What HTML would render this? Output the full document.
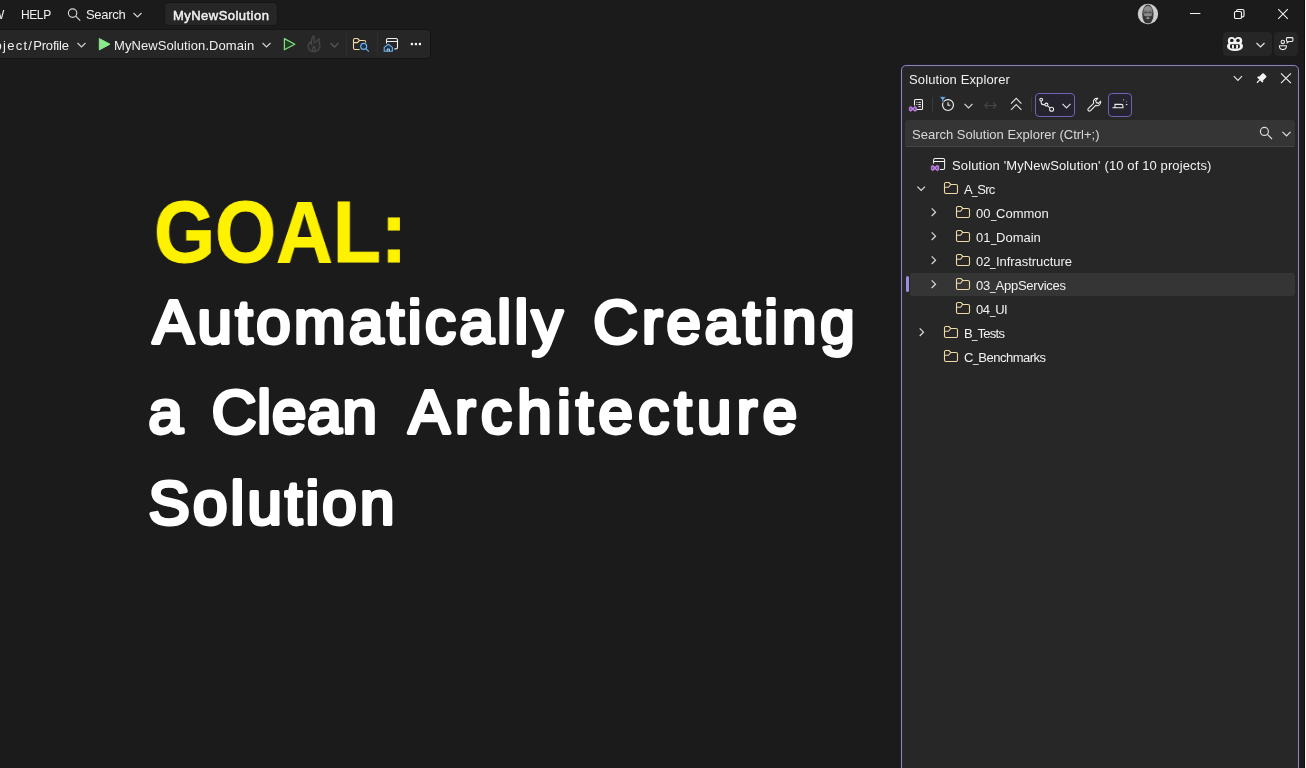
<!DOCTYPE html>
<html lang="en">
<head>
<meta charset="utf-8">
<title>MyNewSolution</title>
<style>
*{box-sizing:border-box;margin:0;padding:0}
html,body{width:1306px;height:768px;overflow:hidden;background:#1b1b1b}
body{position:relative;font-family:"Liberation Sans",sans-serif;font-size:13px;color:#f0f0f0}
.abs{position:absolute}
.t{will-change:transform;position:absolute;white-space:nowrap;line-height:16px;height:16px;transform-origin:0 50%}
svg{position:absolute;overflow:visible}
/* top bar */
#tab{left:165px;top:3px;width:112px;height:22px;background:#262626;border-radius:4px;box-shadow:0 0 0 1px #161616}
#toolbar{left:-6px;top:30px;width:436px;height:28px;background:#262626;border-radius:4px;box-shadow:0 0 0 1px #151515}
.sep{position:absolute;width:1px;background:#2f2f2f}
/* solution explorer */
#se{left:901px;top:65px;width:398px;height:720px;background:#272727;border:1px solid #8a86ae;border-radius:5px;box-shadow:0 0 2.5px rgba(52,36,130,.55),inset 0 0 2.5px rgba(52,36,130,.55)}
#search{left:905px;top:120px;width:390px;height:27px;background:#353535;border-radius:4px 4px 2px 2px;border-bottom:1.4px solid #464646}
#sel{left:910px;top:272.5px;width:385px;height:23.5px;background:#353535;border-radius:3px}
#selbar{left:906px;top:276px;width:3.3px;height:16px;background:#978ee0;border-radius:1.6px}
.tb{position:absolute;border:1px solid #6f63b8;border-radius:4px;background:#24232e}
.row{font-size:13px;color:#f2f2f2}
.u{display:inline-block;transform:scaleX(0.76);transform-origin:0 50%;margin-right:-1.75px;letter-spacing:0}
/* big text */
#goal{left:153.74px;top:182.3px;font-family:"Liberation Sans",sans-serif;font-weight:bold;font-size:86.82px;line-height:100px;height:100px;color:#fff200;-webkit-text-stroke:1px #fff200;transform-origin:0 50%;transform:scaleX(0.9044)}
.big{font-family:"Liberation Sans",sans-serif;font-weight:bold;font-size:67.7px;line-height:90px;height:90px;color:#fff;transform-origin:0 50%}
</style>
</head>
<body>
<!-- top menu -->
<div class="t" id="tW" style="left:-7px;top:7px;font-size:12px">W</div>
<div class="t" id="tHelp" style="left:21px;top:7px;font-size:12px;letter-spacing:-0.4px">HELP</div>
<svg style="left:67px;top:8px" width="14" height="13" viewBox="67 8 14 13" fill="none" stroke="#d6d6d6" stroke-width="1.15"><circle cx="72.6" cy="13.1" r="4.2"/><path d="M75.7 16.2 L80.2 20.6"/></svg>
<div class="t" id="tSearch" style="left:86px;top:7px;font-size:13px;letter-spacing:-0.309px">Search</div>
<svg style="left:133px;top:12px" width="9" height="6" viewBox="0 0 9 6" fill="none" stroke="#d0d0d0" stroke-width="1.2"><path d="M0.5 1 L4.5 5 L8.5 1"/></svg>
<div class="abs" id="tab"></div>
<div class="t" id="tTab" style="left:173px;top:8px;font-size:13px;-webkit-text-stroke:0.5px #f0f0f0;letter-spacing:0.465px">MyNewSolution</div>

<!-- window controls -->
<svg style="left:1137px;top:3px" width="22" height="22" viewBox="0 0 22 22">
<defs><clipPath id="av"><circle cx="10.95" cy="11" r="10.2"/></clipPath><filter id="avb" x="-20%" y="-20%" width="140%" height="140%"><feGaussianBlur stdDeviation="0.55"/></filter></defs>
<g clip-path="url(#av)"><rect width="22" height="22" fill="#cdcdcd"/><g filter="url(#avb)"><ellipse cx="10.9" cy="11.2" rx="5.7" ry="9.6" fill="#3e3e3e"/><ellipse cx="10.9" cy="9" rx="4.5" ry="6.2" fill="#808080"/><ellipse cx="10.9" cy="5.6" rx="3.4" ry="1.8" fill="#8f8f8f"/><rect x="7.2" y="8.7" width="7.4" height="1.5" fill="#4e4e4e"/><rect x="10.4" y="8.5" width="1" height="3" fill="#8a8a8a"/><ellipse cx="10.9" cy="12" rx="3.6" ry="1.3" fill="#8a8a8a"/><path d="M6.3 12.6 C7.6 13.8 14.2 13.8 15.5 12.6 C16 16.4 14.4 20.6 10.9 20.6 C7.4 20.6 5.8 16.4 6.3 12.6 Z" fill="#343434"/><ellipse cx="10.9" cy="15.1" rx="1.7" ry="0.9" fill="#a8a8a8"/><ellipse cx="10.9" cy="22" rx="7" ry="1.8" fill="#b4b4b4"/></g></g></svg>
<svg style="left:1190px;top:13px" width="11" height="1" viewBox="0 0 11 1"><rect x="0" y="0" width="10.4" height="1" fill="#f4f4f4"/></svg>
<svg style="left:1233px;top:8px" width="12" height="12" viewBox="0 0 12 12" fill="none" stroke="#f4f4f4" stroke-width="1.15"><rect x="1.5" y="3.5" width="7" height="7" rx="1.3"/><path d="M3.6 3.3 V3 a1.5 1.5 0 0 1 1.5 -1.5 H9.5 a1.5 1.5 0 0 1 1.5 1.5 V7.4 a1.5 1.5 0 0 1 -1.5 1.5 H8.7"/></svg>
<svg style="left:1278px;top:9px" width="10" height="10" viewBox="0 0 10 10" fill="none" stroke="#f0f0f0" stroke-width="1.1"><path d="M0.2 0.2 L9.8 9.8 M9.8 0.2 L0.2 9.8"/></svg>

<!-- toolbar -->
<div class="abs" id="toolbar"></div>
<div class="t" id="tProf" style="left:-11.45px;top:38px;font-size:13px;letter-spacing:-0.17px"><span style="letter-spacing:1.25px">roject/</span>Profile</div>
<svg style="left:77px;top:42px" width="9" height="6" viewBox="0 0 9 6" fill="none" stroke="#d0d0d0" stroke-width="1.2"><path d="M0.5 1 L4.5 5 L8.5 1"/></svg>
<svg style="left:98px;top:37px" width="14" height="14" viewBox="98 37 14 14"><path d="M99.3 38.6 L110 44.2 L99.3 49.9 Z" fill="#8be88b" stroke="#8be88b" stroke-width="1" stroke-linejoin="round"/></svg>
<div class="t" id="tDom" style="left:114px;top:38px;font-size:13px;letter-spacing:0.082px">MyNewSolution.Domain</div>
<svg style="left:262px;top:42px" width="9" height="6" viewBox="0 0 9 6" fill="none" stroke="#d0d0d0" stroke-width="1.2"><path d="M0.5 1 L4.5 5 L8.5 1"/></svg>
<svg style="left:283px;top:37px" width="14" height="14" viewBox="283 37 14 14"><path d="M284.4 38.6 L294.8 44.2 L284.4 49.8 Z" fill="#1f3d1f" stroke="#86dc86" stroke-width="1.2" stroke-linejoin="round"/></svg>
<svg style="left:307px;top:35px" width="15" height="18" viewBox="0 0 15 18" fill="#2b2b2b" stroke="#474747" stroke-width="1.3"><path d="M6.6 1 C9 3.2 5.4 5.6 7.8 7.8 C9 7 9.6 5 12.2 4 C10.8 7 13.8 8.6 12.8 12.2 C12 15.2 9.4 16.8 6.8 16.8 C3.6 16.8 1 14.4 1 11.2 C1 9.2 2 8 3 7 C3.4 8.2 3.8 9 4.6 9.4 C4 6 4.6 3.2 6.6 1 Z"/><path d="M6.9 16.6 C5.2 15.6 5 13.4 7 11.6 C8.8 13.2 8.8 15.4 6.9 16.6" fill="none"/></svg>
<svg style="left:330px;top:42px" width="9" height="6" viewBox="0 0 9 6" fill="none" stroke="#555555" stroke-width="1.4"><path d="M0.5 1 L4.5 5 L8.5 1"/></svg>
<div class="sep" style="left:346px;top:33px;height:23px"></div>
<svg style="left:353px;top:37px" width="18" height="17" viewBox="353 37 18 17" fill="none" stroke-width="1.1"><path d="M359.6 49.5 H355 a1.5 1.5 0 0 1 -1.5 -1.5 V40 a1.5 1.5 0 0 1 1.5 -1.5 H357.6 L359.5 40.5 H364.2 a1.5 1.5 0 0 1 1.5 1.5 V42.4 M353.5 42.6 H357.4 L359.5 40.5" stroke="#f0d9a6"/><circle cx="363.7" cy="46.4" r="3" stroke="#70aee8" fill="#17324e" stroke-width="1.15"/><path d="M365.9 48.7 L368.9 51.7" stroke="#70aee8" stroke-width="1.2"/></svg>
<div class="sep" style="left:377px;top:33px;height:23px"></div>
<svg style="left:383px;top:37px" width="17" height="16" viewBox="383 37 17 16" fill="none" stroke-width="1.1"><path d="M386.5 43.4 V40 a1.5 1.5 0 0 1 1.5 -1.5 H396 a1.5 1.5 0 0 1 1.5 1.5 V47.4 a1.5 1.5 0 0 1 -1.5 1.5 H394.4 M386.5 41.5 H397.5" stroke="#f2f2f2"/><path d="M384.2 47.4 L388.3 44.2 L392.4 47.4 V51.2 H384.2 Z" stroke="#70aee8" fill="#17324e" stroke-linejoin="round"/><path d="M387.2 51.2 V49 H389.4 V51.2" stroke="#d8e6f4" stroke-width="0.9"/></svg>
<svg style="left:410px;top:42px" width="12" height="4" viewBox="0 0 12 4" fill="#f4f4f4"><rect x="0.8" y="0.9" width="2.2" height="2.3"/><rect x="4.8" y="0.9" width="2.2" height="2.3"/><rect x="8.8" y="0.9" width="2.2" height="2.3"/></svg>

<!-- copilot buttons -->
<div class="abs" style="left:1223px;top:32px;width:49px;height:24px;background:#262626;border-radius:4px"></div>
<div class="abs" style="left:1274px;top:32px;width:24px;height:24px;background:#252525;border-radius:4px"></div>
<svg style="left:1226px;top:36px" width="18" height="16" viewBox="1226 36 18 16"><ellipse cx="1235" cy="46.2" rx="8" ry="4.9" fill="#f4f4f4"/><circle cx="1231.6" cy="40.8" r="3.8" fill="#f4f4f4"/><circle cx="1238.4" cy="40.8" r="3.8" fill="#f4f4f4"/><ellipse cx="1231.8" cy="40.4" rx="1.8" ry="1.6" fill="#1e1e1e"/><ellipse cx="1238" cy="40.4" rx="1.8" ry="1.6" fill="#1e1e1e"/><rect x="1230" y="44.2" width="9.8" height="4.2" rx="1.4" fill="#1e1e1e"/><rect x="1232" y="44.9" width="1.9" height="3.6" fill="#f4f4f4"/><rect x="1236.1" y="44.9" width="1.9" height="3.6" fill="#f4f4f4"/></svg>
<svg style="left:1256px;top:42px" width="9" height="6" viewBox="0 0 9 6" fill="none" stroke="#e4e4e4" stroke-width="1.2"><path d="M0.5 1 L4.5 5 L8.5 1"/></svg>
<svg style="left:1278px;top:36px" width="16" height="16" viewBox="1278 36 16 16" fill="none" stroke="#ececec" stroke-width="1.1"><circle cx="1282.8" cy="41.9" r="1.7"/><path d="M1279.4 45.8 H1286.4 C1286.4 48.2 1284.8 49.6 1282.9 49.6 C1281 49.6 1279.4 48.2 1279.4 45.8 Z"/><path d="M1287.4 37.6 H1292 a0.9 0.9 0 0 1 0.9 0.9 V40.6 a0.9 0.9 0 0 1 -0.9 0.9 H1288.8 L1287.2 42.8 V41.4 a0.9 0.9 0 0 1 -0.7 -0.9 V38.5 a0.9 0.9 0 0 1 0.9 -0.9 Z"/></svg>

<!-- big text -->
<div class="t" id="goal">GOAL:</div>
<svg id="bigsvg" style="left:0;top:270px" width="900" height="300" viewBox="0 270 900 300" font-family="Liberation Sans, sans-serif" font-size="61.8" fill="#ffffff" stroke="#ffffff" stroke-width="3.8" stroke-linejoin="round" stroke-linecap="round">
<text id="w1" x="152.82" y="343.1" textLength="409.96" lengthAdjust="spacing">Automatically</text>
<text id="w2" x="593.35" y="343.1" textLength="261.24" lengthAdjust="spacing">Creating</text>
<text id="w3" x="148.6" y="433.4">a</text>
<text id="w4" x="211.87" y="433.4" textLength="164.89" lengthAdjust="spacing">Clean</text>
<text id="w5" x="408.5" y="433.4" textLength="388.53" lengthAdjust="spacing">Architecture</text>
<text id="w6" x="148.61" y="523.7" textLength="245.7" lengthAdjust="spacing">Solution</text>
</svg>

<!-- solution explorer -->
<div class="abs" id="se"></div>
<div class="t" id="tSE" style="left:909px;top:72px;font-size:13px;letter-spacing:0.118px">Solution Explorer</div>
<svg style="left:1233px;top:75px" width="10" height="7" viewBox="0 0 10 7" fill="none" stroke="#e4e4e4" stroke-width="1.2"><path d="M0.8 1.2 L4.9 5.3 L9 1.2"/></svg>
<svg style="left:1256px;top:72px" width="12" height="12" viewBox="1256 72 12 12"><g transform="translate(1261.6 78.1) rotate(45)" fill="#f6f6f6"><rect x="-2.7" y="-4.8" width="5.4" height="6.4" rx="1"/><rect x="-3.7" y="1" width="7.4" height="1.7" rx="0.5"/><rect x="-0.6" y="2.6" width="1.2" height="4" /></g></svg>
<svg style="left:1280px;top:73px" width="11" height="11" viewBox="0 0 11 11" fill="none" stroke="#f0f0f0" stroke-width="1.15"><path d="M1 0.4 L10.9 10.2 M10.9 0.4 L1 10.2"/></svg>

<!-- SE toolbar -->
<svg style="left:908px;top:97px" width="17" height="16" viewBox="908 97 17 16" fill="none"><path d="M916.6 109.5 H921.5 a1 1 0 0 0 1 -1 V100.5 a1 1 0 0 0 -1 -1 H915.5 a1 1 0 0 0 -1 1 V105.4" stroke="#f6f6f6" stroke-width="1.05"/><path d="M916.4 102.4 H917.4 M918.4 102.4 H920.9 M916.4 104.5 H917.4 M918.4 104.5 H920.9 M918.4 106.6 H920.9" stroke="#f0f0f0" stroke-width="1"/><path d="M909.2 107.4 L910.8 106.4 L912.8 108 L915 106.4 L916.6 107.2 V110.6 L915 111.4 L912.8 109.8 L910.8 111.4 L909.2 110.4 Z" fill="#bd7ce6" stroke="#c78bee" stroke-width="0.5"/><path d="M910.7 108.2 V109.6 M914.8 107.9 V109.9" stroke="#3a2a48" stroke-width="0.9"/></svg>
<div class="sep" style="left:932px;top:97px;height:15px;background:#343b46"></div>
<svg style="left:939px;top:96px" width="16" height="16" viewBox="939 96 16 16" fill="none"><circle cx="948" cy="105" r="5.45" stroke="#f2f2f2" stroke-width="1.15"/><path d="M948 102.2 V105.3 H950.3" stroke="#f2f2f2" stroke-width="1.1"/><path d="M939.6 96.7 H945.9 L943.6 99.6 V102.6 L942 101.6 V99.6 Z" fill="#6cb2f2" stroke="#272727" stroke-width="0.5"/></svg>
<svg style="left:964px;top:103px" width="9" height="6" viewBox="0 0 9 6" fill="none" stroke="#d8d8d8" stroke-width="1.2"><path d="M0.5 0.8 L4.5 4.8 L8.5 0.8"/></svg>
<svg style="left:984px;top:101px" width="13" height="9" viewBox="0 0 13 9" fill="none" stroke="#454545" stroke-width="1.2"><path d="M0.8 4.5 H12.2 M3.8 1.4 L0.8 4.5 L3.8 7.6 M9.2 1.4 L12.2 4.5 L9.2 7.6"/></svg>
<svg style="left:1010px;top:97px" width="13" height="14" viewBox="0 0 13 14" fill="none" stroke="#dcdcdc" stroke-width="1.2"><path d="M1 6.6 L6.2 1.4 L11.4 6.6 M1 12.8 L6.2 7.6 L11.4 12.8"/></svg>
<div class="sep" style="left:1031px;top:97px;height:15px;background:#383838"></div>
<div class="abs tb" style="left:1035px;top:93px;width:40px;height:24px"></div>
<svg style="left:1039px;top:97px" width="16" height="16" viewBox="1039 97 16 16" fill="none" stroke="#ececec" stroke-width="1.1"><circle cx="1041.2" cy="99.6" r="1.4"/><circle cx="1046.4" cy="104.6" r="1.5"/><circle cx="1051.6" cy="109.2" r="2"/><path d="M1041.2 101 V102.6 a2 2 0 0 0 2 2 H1044.9 M1047.6 105.8 L1050 107.8"/></svg>
<svg style="left:1062px;top:103px" width="9" height="6" viewBox="0 0 9 6" fill="none" stroke="#e0e0e0" stroke-width="1.2"><path d="M0.5 0.8 L4.5 4.8 L8.5 0.8"/></svg>
<svg style="left:1087px;top:97px" width="15" height="15" viewBox="1087 97 15 15" fill="none" stroke="#e8e8e8" stroke-width="1.15"><path d="M1097.8 98.4 a3.6 3.6 0 0 0 -4.2 4.9 L1088.2 108.7 a1.5 1.5 0 0 0 2.1 2.1 L1095.7 105.4 a3.6 3.6 0 0 0 4.9 -4.2 L1098.4 103.4 L1096.4 102.6 L1095.6 100.6 Z" stroke-linejoin="round"/></svg>
<div class="abs tb" style="left:1108px;top:93px;width:24px;height:24px"></div>
<svg style="left:1111px;top:98px" width="18" height="12" viewBox="1111 98 18 12" fill="none" stroke="#ececec" stroke-width="1.1"><path d="M1112.4 107.8 H1123 V106.2 a1.8 1.8 0 0 0 -1.8 -1.8 H1115 V107.6"/><path d="M1123.2 99.6 L1124 100.4 M1126.4 101.6 L1127 102.2 M1125.8 104.6 H1127.4" stroke-width="1"/></svg>

<div class="abs" id="search"></div>
<div class="t" id="tSS" style="left:912px;top:127px;font-size:13px;color:#d8d8d8;letter-spacing:0.001px">Search Solution Explorer (Ctrl+;)</div>
<svg style="left:1259px;top:126px" width="14" height="14" viewBox="1259 126 14 14" fill="none" stroke="#e0e0e0" stroke-width="1.15"><circle cx="1264.4" cy="131.4" r="4"/><path d="M1267.4 134.4 L1272 139"/></svg>
<svg style="left:1282px;top:131px" width="9" height="6" viewBox="0 0 9 6" fill="none" stroke="#e0e0e0" stroke-width="1.2"><path d="M0.5 0.8 L4.5 4.8 L8.5 0.8"/></svg>

<div class="abs" id="sel"></div>
<div class="abs" id="selbar"></div>
<svg style="left:930px;top:158px" width="17" height="14" viewBox="930 158 17 14" fill="none"><path d="M933.6 163.6 V160 a1.5 1.5 0 0 1 1.5 -1.5 H943.1 a1.5 1.5 0 0 1 1.5 1.5 V168 a1.5 1.5 0 0 1 -1.5 1.5 H940 M933.6 161.4 H944.6" stroke="#f4f4f4" stroke-width="1.05"/><path d="M931.2 166.2 L932.8 165.2 L934.9 166.9 L937.2 165.2 L938.9 166 V169.9 L937.2 170.8 L934.9 169.1 L932.8 170.8 L931.2 169.8 Z" fill="#bd7ce6" stroke="#c78bee" stroke-width="0.5"/><path d="M932.7 167.2 V168.8 M937 166.9 V169.1" stroke="#3a2a48" stroke-width="0.9"/></svg>
<div class="t row" id="r0" style="left:952px;top:158px;letter-spacing:0.119px">Solution 'MyNewSolution' (10 of 10 projects)</div>
<svg style="left:944px;top:182px" width="14" height="12" viewBox="0 0 14 12" fill="none" stroke="#f0daa8" stroke-width="1.1"><path d="M0.5 2 a1.5 1.5 0 0 1 1.5 -1.5 H4.9 L6.8 2.5 H12 a1.5 1.5 0 0 1 1.5 1.5 V10 a1.5 1.5 0 0 1 -1.5 1.5 H2 a1.5 1.5 0 0 1 -1.5 -1.5 Z M0.5 5.3 H4.5 L6.8 2.5"/></svg>
<svg style="left:916px;top:185px" width="10" height="7" viewBox="0 0 10 7" fill="none" stroke="#dcdcdc" stroke-width="1.2"><path d="M1.4 1.6 L5.2 5.4 L9 1.6"/></svg>
<div class="t row" id="r1" style="left:964px;top:182px;letter-spacing:-0.805px">A<span class="u">_</span>Src</div>
<svg style="left:956px;top:206px" width="14" height="12" viewBox="0 0 14 12" fill="none" stroke="#f0daa8" stroke-width="1.1"><path d="M0.5 2 a1.5 1.5 0 0 1 1.5 -1.5 H4.9 L6.8 2.5 H12 a1.5 1.5 0 0 1 1.5 1.5 V10 a1.5 1.5 0 0 1 -1.5 1.5 H2 a1.5 1.5 0 0 1 -1.5 -1.5 Z M0.5 5.3 H4.5 L6.8 2.5"/></svg>
<svg style="left:931px;top:207px" width="7" height="10" viewBox="0 0 7 10" fill="none" stroke="#dcdcdc" stroke-width="1.2"><path d="M0.7 1.4 L4.5 5.2 L0.7 9"/></svg>
<div class="t row" id="r2" style="left:976px;top:206px;letter-spacing:0.014px">00<span class="u">_</span>Common</div>
<svg style="left:956px;top:230px" width="14" height="12" viewBox="0 0 14 12" fill="none" stroke="#f0daa8" stroke-width="1.1"><path d="M0.5 2 a1.5 1.5 0 0 1 1.5 -1.5 H4.9 L6.8 2.5 H12 a1.5 1.5 0 0 1 1.5 1.5 V10 a1.5 1.5 0 0 1 -1.5 1.5 H2 a1.5 1.5 0 0 1 -1.5 -1.5 Z M0.5 5.3 H4.5 L6.8 2.5"/></svg>
<svg style="left:931px;top:231px" width="7" height="10" viewBox="0 0 7 10" fill="none" stroke="#dcdcdc" stroke-width="1.2"><path d="M0.7 1.4 L4.5 5.2 L0.7 9"/></svg>
<div class="t row" id="r3" style="left:976px;top:230px;letter-spacing:0.014px">01<span class="u">_</span>Domain</div>
<svg style="left:956px;top:254px" width="14" height="12" viewBox="0 0 14 12" fill="none" stroke="#f0daa8" stroke-width="1.1"><path d="M0.5 2 a1.5 1.5 0 0 1 1.5 -1.5 H4.9 L6.8 2.5 H12 a1.5 1.5 0 0 1 1.5 1.5 V10 a1.5 1.5 0 0 1 -1.5 1.5 H2 a1.5 1.5 0 0 1 -1.5 -1.5 Z M0.5 5.3 H4.5 L6.8 2.5"/></svg>
<svg style="left:931px;top:255px" width="7" height="10" viewBox="0 0 7 10" fill="none" stroke="#dcdcdc" stroke-width="1.2"><path d="M0.7 1.4 L4.5 5.2 L0.7 9"/></svg>
<div class="t row" id="r4" style="left:976px;top:254px;letter-spacing:-0.035px">02<span class="u">_</span>Infrastructure</div>
<svg style="left:956px;top:278px" width="14" height="12" viewBox="0 0 14 12" fill="none" stroke="#f0daa8" stroke-width="1.1"><path d="M0.5 2 a1.5 1.5 0 0 1 1.5 -1.5 H4.9 L6.8 2.5 H12 a1.5 1.5 0 0 1 1.5 1.5 V10 a1.5 1.5 0 0 1 -1.5 1.5 H2 a1.5 1.5 0 0 1 -1.5 -1.5 Z M0.5 5.3 H4.5 L6.8 2.5"/></svg>
<svg style="left:931px;top:279px" width="7" height="10" viewBox="0 0 7 10" fill="none" stroke="#dcdcdc" stroke-width="1.2"><path d="M0.7 1.4 L4.5 5.2 L0.7 9"/></svg>
<div class="t row" id="r5" style="left:976px;top:278px;letter-spacing:-0.238px">03<span class="u">_</span>AppServices</div>
<svg style="left:956px;top:302px" width="14" height="12" viewBox="0 0 14 12" fill="none" stroke="#f0daa8" stroke-width="1.1"><path d="M0.5 2 a1.5 1.5 0 0 1 1.5 -1.5 H4.9 L6.8 2.5 H12 a1.5 1.5 0 0 1 1.5 1.5 V10 a1.5 1.5 0 0 1 -1.5 1.5 H2 a1.5 1.5 0 0 1 -1.5 -1.5 Z M0.5 5.3 H4.5 L6.8 2.5"/></svg>
<div class="t row" id="r6" style="left:976px;top:302px;letter-spacing:-0.404px">04<span class="u">_</span>UI</div>
<svg style="left:944px;top:326px" width="14" height="12" viewBox="0 0 14 12" fill="none" stroke="#f0daa8" stroke-width="1.1"><path d="M0.5 2 a1.5 1.5 0 0 1 1.5 -1.5 H4.9 L6.8 2.5 H12 a1.5 1.5 0 0 1 1.5 1.5 V10 a1.5 1.5 0 0 1 -1.5 1.5 H2 a1.5 1.5 0 0 1 -1.5 -1.5 Z M0.5 5.3 H4.5 L6.8 2.5"/></svg>
<svg style="left:919px;top:327px" width="7" height="10" viewBox="0 0 7 10" fill="none" stroke="#dcdcdc" stroke-width="1.2"><path d="M0.7 1.4 L4.5 5.2 L0.7 9"/></svg>
<div class="t row" id="r7" style="left:964px;top:326px;letter-spacing:-0.698px">B<span class="u">_</span>Tests</div>
<svg style="left:944px;top:350px" width="14" height="12" viewBox="0 0 14 12" fill="none" stroke="#f0daa8" stroke-width="1.1"><path d="M0.5 2 a1.5 1.5 0 0 1 1.5 -1.5 H4.9 L6.8 2.5 H12 a1.5 1.5 0 0 1 1.5 1.5 V10 a1.5 1.5 0 0 1 -1.5 1.5 H2 a1.5 1.5 0 0 1 -1.5 -1.5 Z M0.5 5.3 H4.5 L6.8 2.5"/></svg>
<div class="t row" id="r8" style="left:964px;top:350px;letter-spacing:-0.514px">C<span class="u">_</span>Benchmarks</div>
<div class="abs" style="left:1304px;top:0;width:1px;height:768px;background:#0e0e0e"></div>
<div class="abs" style="left:1305px;top:0;width:1px;height:768px;background:#f4f4f4"></div>
</body>
</html>
